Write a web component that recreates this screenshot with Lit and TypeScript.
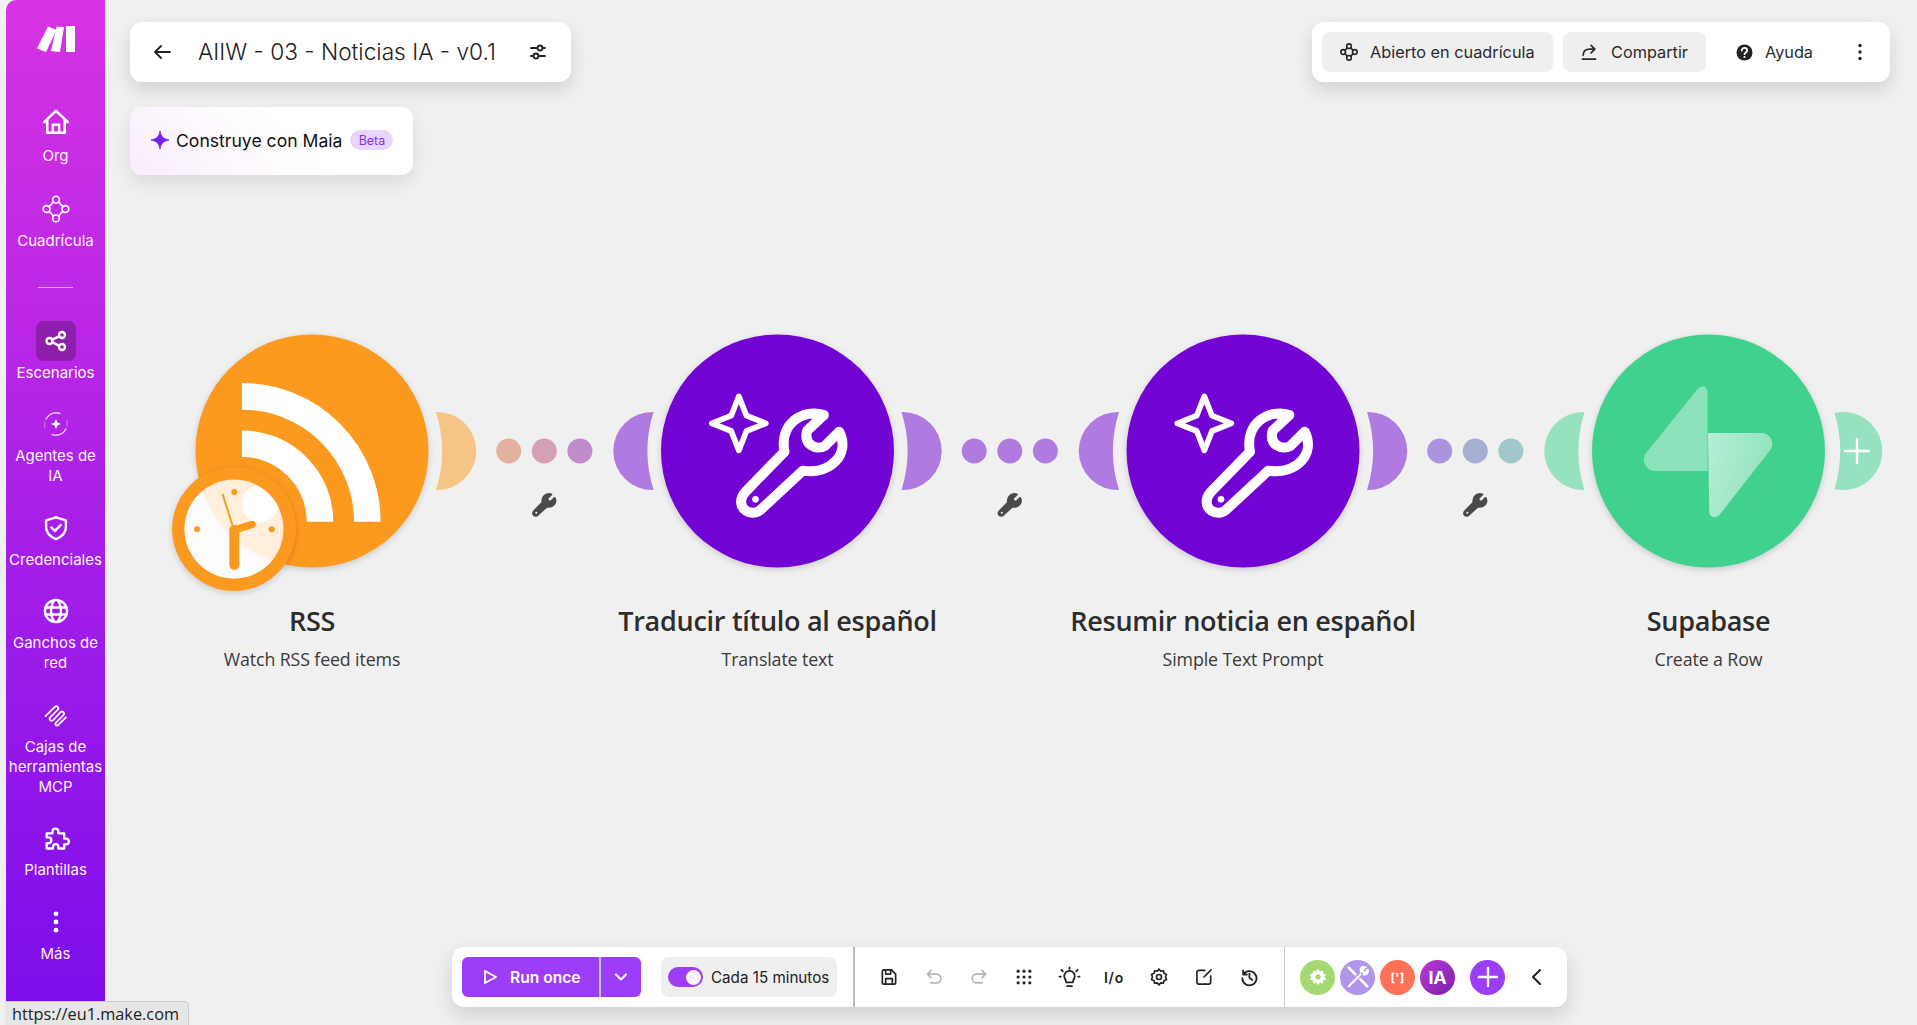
import { LitElement, html, css, svg } from "lit";
import { customElement } from "lit/decorators.js";

const wrenchPath = "M550 285C490 265 415 310 432 395L318 512C290 540 300 578 340 578C350 578 358 573 365 565L487 452C572 465 630 400 596 335L553 378C528 392 488 375 500 332Z";

const wrench = (transform: string, color: string, filled: boolean) => svg`
  <g transform=${transform}>
    <path d=${wrenchPath} fill=${filled ? color : "none"} stroke=${color} stroke-width="30" stroke-linejoin="round" stroke-linecap="round"></path>
    ${filled ? svg`<circle cx="345" cy="538" r="14" fill="#f0f0f0"></circle>` : svg`<circle cx="345" cy="538" r="10" fill=${color}></circle>`}
  </g>`;

const MOON = "M124 -38.98A39 39 0 1 1 124 38.98A130 130 0 0 0 124 -38.98Z";
const PLUS_MOON = "M126 -38A39 39 0 1 1 126 38A132 132 0 0 0 126 -38Z";
const moon = (cx: number, side: number, color: string, d = MOON) => svg`
  <path transform="translate(${cx} 451) scale(${side} 1)" d=${d} fill=${color}></path>`;

const starTool = (cx: number) => svg`
  <g transform="translate(${cx} 451) scale(.3333) translate(-411 -393)">
    <path d="M295 229L272 287L214 310L272 333L295 391L318 333L376 310L318 287Z" fill="none" stroke="#fff" stroke-width="17" stroke-linejoin="round"></path>
  </g>
  ${wrench(`translate(${cx} 451) scale(.3333) translate(-411 -393)`, "#fff", false)}`;

const rss = (cx: number) => svg`
  <g fill="none" stroke="#fff" stroke-width="26.6">
    <path d="M${cx - 70} 396.4A125.3 125.3 0 0 1 ${cx + 55.3} 521.7"></path>
    <path d="M${cx - 70} 443.7A78 78 0 0 1 ${cx + 8} 521.7"></path>
  </g>
  <circle cx="260" cy="504" r="18.5" fill="#fff"></circle>`;

const clock = svg`
  <g>
    <path d="M234 467a62 62 0 1 0 .01 0ZM234 479.5a49.5 49.5 0 1 1-.01 0Z" fill="#fb9a1f" fill-rule="evenodd" class="shadow"></path>
    <circle cx="234" cy="529" r="49.5" fill="#fff" opacity=".84"></circle>
    <g fill="#fb9a1f">
      <circle cx="234.3" cy="492" r="3"></circle>
      <circle cx="197" cy="529.3" r="3"></circle>
      <circle cx="271.7" cy="529.3" r="3"></circle>
    </g>
    <g stroke="#fb9a1f" stroke-linecap="round" fill="none">
      <path d="M234.3 530V565" stroke-width="10"></path>
      <path d="M234.3 530L252 524.5" stroke-width="7.5"></path>
      <path d="M222.7 494.5L233 527" stroke-width="2"></path>
    </g>
  </g>`;

const supabase = svg`
  <defs>
    <linearGradient id="sb" x1="0" y1="0.15" x2="1" y2="0.55">
      <stop offset="0" stop-color="#b5eed5"></stop>
      <stop offset="1" stop-color="#8ee2bb"></stop>
    </linearGradient>
  </defs>
  <g transform="translate(1400 320) scale(.3333)">
    <path d="M923 453H765C740 453 722 422 738 400L892 208C903 193 923 198 923 216Z" fill="#8ce2ba"></path>
    <path d="M924 339H1085C1110 339 1127 368 1111 390L960 583C948 598 928 592 928 575Z" fill="url(#sb)"></path>
  </g>`;

type Node = {
  x: number; fill: string; title: string; sub: string;
  leftMoon?: string; rightMoon?: string; dots?: string[]; plus?: boolean;
};

const NODES: Node[] = [
  { x: 312, fill: "#fb9a1f", title: "RSS", sub: "Watch RSS feed items", rightMoon: "#f6c586", dots: ["#e4b0a0", "#d4a0b6", "#c08ccb"] },
  { x: 777.5, fill: "#7204d4", title: "Traducir título al español", sub: "Translate text", leftMoon: "#b07be0", rightMoon: "#b07be0", dots: ["#b07be0", "#b07be0", "#b07be0"] },
  { x: 1243, fill: "#7204d4", title: "Resumir noticia en español", sub: "Simple Text Prompt", leftMoon: "#b07be0", rightMoon: "#b07be0", dots: ["#ac93dd", "#a6aed2", "#a0c7ca"] },
  { x: 1708.5, fill: "#40d18f", title: "Supabase", sub: "Create a Row", leftMoon: "#96e2bf", rightMoon: "#96e2bf", plus: true },
];

const stroke = (w: number, inner: unknown) => svg`<g fill="none" stroke="currentColor" stroke-width=${w} stroke-linecap="round" stroke-linejoin="round">${inner}</g>`;
const ico = (size: number, inner: unknown) => html`<svg width=${size} height=${size} viewBox="0 0 24 24">${inner}</svg>`;

const NAV = [
  { label: "Org", size: 30, icon: stroke(2, svg`<path d="M2.5 10.5L12 1.5l9.5 9M5 8.5v10.5h14V8.5M9.5 19V12.5h5V19"></path>`) },
  { label: "Cuadrícula", size: 30, icon: stroke(1.3, svg`<circle cx="12" cy="4.5" r="2.7"></circle><circle cx="12" cy="19.5" r="2.7"></circle><circle cx="4.5" cy="12" r="2.7"></circle><circle cx="19.5" cy="12" r="2.7"></circle><path d="M14 6.5L17.5 10M6.5 10L10 6.5M6.5 14L10 17.5M14 17.5L17.5 14"></path>`), divider: true },
  { label: "Escenarios", size: 24, active: true, icon: stroke(2.4, svg`<circle cx="5.5" cy="12" r="3"></circle><circle cx="18" cy="6" r="3"></circle><circle cx="18" cy="18" r="3"></circle><path d="M8.3 10.7L15.2 7.4M8.3 13.3L15.2 16.6"></path>`) },
  { label: "Agentes de\nIA", size: 30, icon: svg`<path d="M12 8l1.2 2.8L16 12l-2.8 1.2L12 16l-1.2-2.8L8 12l2.8-1.2Z" fill="currentColor"></path><path d="M4 8a9 9 0 0 1 11-4.5M20 16a9 9 0 0 1-11 4.5" fill="none" stroke="currentColor" stroke-opacity=".75" stroke-width="1.2" stroke-linecap="round"></path><path d="M20.5 9a9 9 0 0 1 .3 5M3.3 15a9 9 0 0 1-.3-5" fill="none" stroke="currentColor" stroke-opacity=".3" stroke-width="1.2"></path>` },
  { label: "Credenciales", size: 28, icon: stroke(2, svg`<path d="M12 2.8L20.5 5.5V11C20.5 16 17 19.7 12 21.5C7 19.7 3.5 16 3.5 11V5.5Z"></path><path d="M8 11.5L11 14.5L16 9.5"></path>`) },
  { label: "Ganchos de\nred", size: 28, icon: stroke(2, svg`<circle cx="12" cy="12" r="9.5"></circle><ellipse cx="12" cy="12" rx="4.2" ry="9.5"></ellipse><path d="M3 9H21M3 15H21"></path>`) },
  { label: "Cajas de\nherramientas\nMCP", size: 28, icon: stroke(1.5, svg`<path d="M3 13L11 5C13 3.5 15 6 13.5 7.5L7 14C5.5 15.5 8 18 9.5 16.5L16 9.5C17.5 8 20 10.5 18.5 12L12 18.5C10.5 20 12.5 22 14 20.5L20.5 14"></path>`) },
  { label: "Plantillas", size: 28, icon: stroke(2, svg`<path d="M4 8H9V6.5A2.5 2.5 0 0 1 14 6.5V8H19V12.5H20.5A2.5 2.5 0 0 1 20.5 17.5H19V21H14V19.5A2.2 2.2 0 0 0 9.5 19.5V21H4V16.5H5.5A2.5 2.5 0 0 0 5.5 11.5H4Z"></path>`) },
  { label: "Más", size: 28, icon: svg`<circle cx="12" cy="5" r="2.1" fill="currentColor"></circle><circle cx="12" cy="12" r="2.1" fill="currentColor"></circle><circle cx="12" cy="19" r="2.1" fill="currentColor"></circle>` },
];

@customElement("app-root")
export class AppRoot extends LitElement {
  static styles = css`
    :host { display: block; position: relative; width: 100vw; height: 100vh; overflow: hidden; background: #f0f0f0; font-family: Inter, "Liberation Sans", sans-serif; color: #2b2b2b; }
    .canvas { position: absolute; inset: 0; }
    .canvas svg { display: block; }
    .shadow { filter: drop-shadow(0 2px 3px rgba(0,0,0,.16)); }
    .node-label { position: absolute; width: 440px; text-align: center; font-family: "Open Sans", sans-serif; color: #2d2d2d; top: 602px; }
    .node-title { font-size: 27px; line-height: 38px; font-weight: 600; letter-spacing: -0.28px; }
    .node-sub { font-size: 17.8px; line-height: 24px; margin-top: 7px; color: #3a3a3a; letter-spacing: -0.12px; }

    .shell { position: relative; display: flex; height: 100%; }
    .side { box-sizing: border-box; width: 99px; margin-left: 6px; height: 1002px; background: linear-gradient(180deg, #d733e3 0%, #7d0eeb 100%); border-top-left-radius: 10px; color: #fff; display: flex; flex-direction: column; align-items: center; padding-top: 26px; flex: none; }
    .logo { display: block; margin-bottom: 51.5px; }
    .nav { display: flex; flex-direction: column; align-items: center; gap: 21.5px; width: 100%; }
    .item { display: flex; flex-direction: column; align-items: center; width: 100%; }
    .item.divided { margin-top: 1.5px; }
    .item-ico { width: 40px; height: 40px; display: flex; align-items: center; justify-content: center; border-radius: 8px; }
    .item.active .item-ico { background: #8e1fac; }
    .item-text { font-size: 15px; line-height: 20px; margin-top: 2px; text-align: center; width: 99px; color: #fdf4ff; white-space: pre-line; }
    .divider { width: 35px; height: 1px; background: rgba(255,255,255,.55); margin: 36px 0 11.5px; }

    .main { flex: 1; min-width: 0; box-sizing: border-box; display: flex; flex-direction: column; padding: 22px 27.5px 18px 25px; }
    .top { display: flex; justify-content: space-between; }
    .card { background: #fff; border-radius: 12px; box-shadow: 0 8px 18px rgba(0,0,0,.13); height: 60px; display: flex; align-items: center; box-sizing: border-box; }
    .title-card { width: 441px; padding: 0 24px 0 22px; }
    .title-card .t { flex: 1; font-size: 22.7px; font-weight: 300; margin-left: 26px; padding-bottom: 2px; white-space: nowrap; color: #222; }
    .title-card svg { flex: none; color: #222; }
    .actions { width: 577.5px; padding: 0 10px; }
    .btn { height: 40px; display: flex; align-items: center; border-radius: 8px; font-size: 16.3px; white-space: nowrap; box-sizing: border-box; }
    .btn.gray { background: #efefef; }
    .open { width: 231px; padding-left: 17px; gap: 11px; }
    .share { width: 143px; margin-left: 10px; padding-left: 16px; gap: 12px; }
    .help { margin-left: 30px; gap: 12px; }
    .more { margin-left: auto; margin-right: 17px; color: #222; display: flex; }
    .maia { margin-top: 25px; width: 283px; height: 68px; border-radius: 12px; background: linear-gradient(45deg, #f8ecfb 0%, #fdf9fe 35%, #fff 60%); box-shadow: 0 8px 18px rgba(0,0,0,.09); display: flex; align-items: center; padding: 0 0 2px 20px; box-sizing: border-box; font-size: 17.6px; color: #111; white-space: nowrap; }
    .maia .name { margin-left: 6px; }
    .beta { margin-left: 8px; background: #e8d6ff; color: #8b2cf0; font-size: 12.5px; height: 20px; width: 43px; border-radius: 10px; display: flex; align-items: center; justify-content: center; }
    .spacer { flex: 1; }

    .bar { align-self: flex-start; margin-left: 322px; width: 1115px; height: 60px; background: #fff; border-radius: 12px; box-shadow: 0 8px 20px rgba(0,0,0,.14); display: flex; align-items: center; }
    .run-sec { display: flex; align-items: center; padding-left: 10px; height: 100%; border-right: 2px solid #bdbdbd; width: 403px; box-sizing: border-box; flex: none; }
    .run { display: flex; width: 179px; height: 40px; background: #9c3ef8; border-radius: 6px; color: #fff; font-size: 15.6px; font-weight: 600; overflow: hidden; }
    .run-main { flex: 1; display: flex; align-items: center; padding-left: 21px; gap: 12px; border-right: 2px solid #c2c2c2; white-space: nowrap; }
    .run-caret { width: 40px; display: flex; align-items: center; justify-content: center; }
    .chip { margin-left: 20px; width: 176px; height: 40px; border-radius: 8px; background: #efefef; display: flex; align-items: center; padding-left: 7px; gap: 8px; box-sizing: border-box; font-size: 15.2px; white-space: nowrap; color: #222; }
    .toggle { width: 35px; height: 20px; border-radius: 10px; background: #9c3ef8; display: flex; align-items: center; justify-content: flex-end; padding-right: 2px; box-sizing: border-box; flex: none; }
    .knob { width: 15px; height: 15px; border-radius: 50%; background: #f6f4f8; }
    .tools { display: flex; align-items: center; padding-left: 11.5px; width: 430px; height: 100%; box-sizing: border-box; border-right: 1px solid #c9c9c9; flex: none; }
    .tool { width: 45px; height: 40px; display: flex; align-items: center; justify-content: center; color: #222; flex: none; }
    .tool.off { color: #b5b5b5; }
    .io { font-size: 14px; font-weight: 600; letter-spacing: .8px; }
    .mods { display: flex; align-items: center; padding-left: 15px; }
    .circ { width: 35px; height: 35px; border-radius: 50%; margin-right: 5px; display: flex; align-items: center; justify-content: center; color: #fff; flex: none; }
    .c-green { background: #a5d873; }
    .c-purple { background: #b195eb; }
    .c-coral { background: #ff7058; font-size: 12px; font-weight: 700; letter-spacing: .3px; }
    .c-ia { background: linear-gradient(135deg, #b93cd8, #7a1fa8); font-size: 18px; font-weight: 700; letter-spacing: -.2px; }
    .c-plus { background: #9c3ef8; margin-left: 10px; margin-right: 0; }
    .chev { margin-left: 23.5px; display: flex; color: #222; }

    .status { position: absolute; left: 5px; bottom: 0; width: 184px; height: 24px; box-sizing: border-box; background: #e6e6e6; border: 1px solid #cbcbcb; border-bottom: none; border-left: none; border-top-right-radius: 5px; font-family: "Open Sans", sans-serif; font-size: 16.3px; line-height: 25px; padding-left: 7px; color: #222; white-space: nowrap; }
  `;

  private canvas() {
    return html`<div class="canvas">
      <svg width="1917" height="1025" viewBox="0 0 1917 1025">
        ${NODES.map((n, i) => svg`
          ${n.leftMoon ? moon(n.x, -1, n.leftMoon) : null}
          ${n.rightMoon ? moon(n.x, 1, n.rightMoon, n.plus ? PLUS_MOON : MOON) : null}
          ${n.dots ? n.dots.map((c, d) => svg`<circle cx=${n.x + 196.7 + d * 35.6} cy="451" r="12.5" fill=${c}></circle>`) : null}
          ${n.dots ? wrench(`translate(${n.x + 232.3} 505) scale(.0727) translate(-455 -430)`, "#4a4a4a", true) : null}
          <circle class="shadow" cx=${n.x} cy="451" r="116.5" fill=${n.fill}></circle>
          ${i === 0 ? rss(n.x) : null}
          ${i === 1 || i === 2 ? starTool(n.x) : null}
          ${i === 3 ? supabase : null}
        `)}
        ${clock}
        <path d="M1857 439V463M1845 451H1869" stroke="#fff" stroke-width="2.4" stroke-linecap="round"></path>
      </svg>
      ${NODES.map((n) => html`<div class="node-label" style="left:${n.x - 220}px">
        <div class="node-title">${n.title}</div>
        <div class="node-sub">${n.sub}</div>
      </div>`)}
    </div>`;
  }

  private side() {
    return html`<aside class="side">
      <svg class="logo" width="38" height="26" viewBox="0 0 38 26" fill="#fff">
        <path d="M11 0.5L19.5 4L9 26L0 22.5Z"></path>
        <path d="M19.5 0.5L27 1L23 26L14 25Z"></path>
        <path d="M29 0H38V26H29Z"></path>
      </svg>
      <nav class="nav">
        ${NAV.map((it) => html`<div class="item ${it.active ? "active" : ""} ${it.divider ? "divided" : ""}">
          <div class="item-ico">${ico(it.size, it.icon)}</div>
          <div class="item-text">${it.label}</div>
          ${it.divider ? html`<div class="divider"></div>` : null}
        </div>`)}
      </nav>
    </aside>`;
  }

  private bar() {
    const tools = [
      { icon: stroke(2, svg`<path d="M4 5.5A2 2 0 0 1 6 3.5H15L20 8.5V18.5A2 2 0 0 1 18 20.5H6A2 2 0 0 1 4 18.5Z"></path><path d="M8 4V8.5H14V4M8 20V14H16V20"></path>`) },
      { off: true, icon: stroke(2, svg`<path d="M8.5 4L4 8.5L8.5 13M4 8.5H15A5 5 0 0 1 15 19H8"></path>`) },
      { off: true, icon: stroke(2, svg`<path d="M15.5 4L20 8.5L15.5 13M20 8.5H9A5 5 0 0 0 9 19H16"></path>`) },
      { icon: svg`${[5, 12, 19].map((y) => [5, 12, 19].map((x) => svg`<circle cx=${x} cy=${y} r="1.9" fill="currentColor"></circle>`))}` },
      { size: 23, icon: stroke(1.9, svg`<path d="M8.5 17C8.5 14.5 6.5 13.5 6.5 10.5A5.5 5.5 0 0 1 17.5 10.5C17.5 13.5 15.5 14.5 15.5 17ZM9.5 21H14.5M12 1.5V3M3.5 4L5 5.5M20.5 4L19 5.5M1.5 11H3M21 11H22.5"></path>`) },
      { io: true },
      { icon: stroke(2, svg`<path d="M12 2.5L14 5L17.2 4.5L18 7.6L21 9L19.8 12L21 15L18 16.4L17.2 19.5L14 19L12 21.5L10 19L6.8 19.5L6 16.4L3 15L4.2 12L3 9L6 7.6L6.8 4.5L10 5Z"></path><circle cx="12" cy="12" r="3"></circle>`) },
      { icon: stroke(2, svg`<path d="M13 4H6A2.5 2.5 0 0 0 3.5 6.5V18A2.5 2.5 0 0 0 6 20.5H17.5A2.5 2.5 0 0 0 20 18V11M12 12L20.5 3.5"></path>`) },
      { icon: stroke(2.2, svg`<path d="M5 4.5V9H9.5M5.3 9A8.5 8.5 0 1 1 4 13.5"></path><path d="M12.5 8V13L16 15.5"></path>`) },
    ];
    return html`<div class="bar">
      <div class="run-sec">
        <div class="run">
          <div class="run-main">
            <svg width="15" height="16" viewBox="0 0 15 16"><path d="M2 2L13 8L2 14Z" fill="none" stroke="#fff" stroke-width="1.8" stroke-linejoin="round"></path></svg>
            <span>Run once</span>
          </div>
          <div class="run-caret">
            <svg width="14" height="14" viewBox="0 0 14 14"><path d="M2 4.5L7 9.5L12 4.5" fill="none" stroke="#fff" stroke-width="2" stroke-linecap="round" stroke-linejoin="round"></path></svg>
          </div>
        </div>
        <div class="chip">
          <div class="toggle"><div class="knob"></div></div>
          <span>Cada 15 minutos</span>
        </div>
      </div>
      <div class="tools">
        ${tools.map((t) => html`<div class="tool ${t.off ? "off" : ""}">
          ${t.io ? html`<span class="io">I/o</span>` : ico(t.size ?? 20, t.icon)}
        </div>`)}
      </div>
      <div class="mods">
        <div class="circ c-green">
          <svg width="20" height="20" viewBox="0 0 24 24"><path d="M12 2L14 5L17.5 4.2L18.3 7.7L22 9L20 12L22 15L18.3 16.3L17.5 19.8L14 19L12 22L10 19L6.5 19.8L5.7 16.3L2 15L4 12L2 9L5.7 7.7L6.5 4.2L10 5Z M12 8.8A3.2 3.2 0 1 0 12.01 8.8Z" fill="#fff" fill-rule="evenodd"></path></svg>
        </div>
        <div class="circ c-purple">
          <svg width="26" height="26" viewBox="0 0 24 24" fill="none" stroke="#fff" stroke-width="2" stroke-linecap="round"><path d="M3.5 3.5L9.5 9.5M14 14L20.5 20.5" stroke-width="2.4"></path><path d="M3.5 20.5L14.5 9.5"></path><path d="M21 5.5L18 8.5L15.5 6L18.5 3C16 1.8 13.5 4 14.5 7"></path><path d="M21 5.5C22 8 19.5 10.3 17 9.4"></path></svg>
        </div>
        <div class="circ c-coral"><span>[']</span></div>
        <div class="circ c-ia"><span>IA</span></div>
        <div class="circ c-plus">
          <svg width="22" height="22" viewBox="0 0 22 22"><path d="M11 2V20M2 11H20" stroke="#fff" stroke-width="2.4" stroke-linecap="round"></path></svg>
        </div>
        <div class="chev">
          <svg width="16" height="20" viewBox="0 0 16 20"><path d="M11 3L4 10L11 17" fill="none" stroke="currentColor" stroke-width="2" stroke-linecap="round" stroke-linejoin="round"></path></svg>
        </div>
      </div>
    </div>`;
  }

  render() {
    return html`
      ${this.canvas()}
      <div class="shell">
        ${this.side()}
        <div class="main">
          <div class="top">
            <div class="card title-card">
              <svg width="20" height="20" viewBox="0 0 20 20"><path d="M18 10H3M9 4L3 10L9 16" fill="none" stroke="currentColor" stroke-width="1.8" stroke-linecap="round" stroke-linejoin="round"></path></svg>
              <span class="t">AIIW - 03 - Noticias IA - v0.1</span>
              <svg width="18" height="18" viewBox="0 0 18 18" fill="none" stroke="currentColor" stroke-width="1.8" stroke-linecap="round"><path d="M2 5H8.5M13.5 5H16M2 13H4.5M9.5 13H16"></path><circle cx="11" cy="5" r="2.5"></circle><circle cx="7" cy="13" r="2.5"></circle></svg>
            </div>
            <div class="card actions">
              <div class="btn gray open">
                ${ico(20, stroke(2, svg`<circle cx="12" cy="5" r="2.8"></circle><circle cx="12" cy="19" r="2.8"></circle><circle cx="5" cy="12" r="2.8"></circle><circle cx="19" cy="12" r="2.8"></circle><path d="M14 7L17 10M7 10L10 7M7 14L10 17M14 17L17 14"></path>`))}
                <span>Abierto en cuadrícula</span>
              </div>
              <div class="btn gray share">
                ${ico(20, stroke(2, svg`<path d="M4 20.5H20M5 16C5 11 8 8.5 13 8.5H18M14.5 4L19 8.5L14.5 13"></path>`))}
                <span>Compartir</span>
              </div>
              <div class="btn help">
                <svg width="17" height="17" viewBox="0 0 17 17"><circle cx="8.5" cy="8.5" r="8" fill="#222"></circle><path d="M5.8 6.5A2.7 2.7 0 0 1 11.2 6.5C11.2 8.4 8.5 8.4 8.5 10.2" fill="none" stroke="#fff" stroke-width="1.8" stroke-linecap="round"></path><circle cx="8.5" cy="13" r="1.1" fill="#fff"></circle></svg>
                <span>Ayuda</span>
              </div>
              <div class="more">
                <svg width="6" height="20" viewBox="0 0 6 20" fill="currentColor"><circle cx="3" cy="3.5" r="1.7"></circle><circle cx="3" cy="10" r="1.7"></circle><circle cx="3" cy="16.5" r="1.7"></circle></svg>
              </div>
            </div>
          </div>
          <div class="maia">
            <svg width="20" height="20" viewBox="0 0 20 20"><path d="M10 1C10.8 6 13 9 19 10C13 11 10.8 14 10 19C9.2 14 7 11 1 10C7 9 9.2 6 10 1Z" fill="#7a1ff0" stroke="#7a1ff0" stroke-width=".8" stroke-linejoin="round"></path></svg>
            <span class="name">Construye con Maia</span>
            <span class="beta">Beta</span>
          </div>
          <div class="spacer"></div>
          ${this.bar()}
        </div>
      </div>
      <div class="status">https://eu1.make.com</div>
    `;
  }
}
